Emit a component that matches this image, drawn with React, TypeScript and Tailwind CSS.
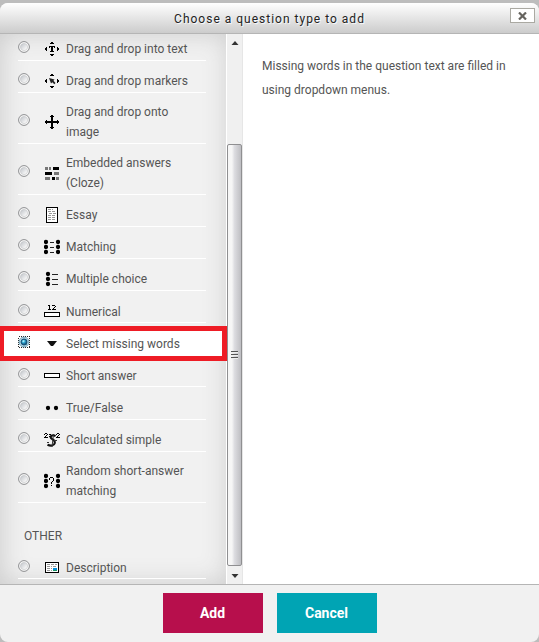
import type { ReactNode } from "react";

type Item = { label: ReactNode; icon: ReactNode; h: string; pad: string; on?: boolean };

function Icon({ children }: { children: ReactNode }) {
  return (
    <svg width="16" height="16" viewBox="0 0 16 16" className="shrink-0" shapeRendering="crispEdges">
      {children}
    </svg>
  );
}

const arrows = (
  <path d="M7 1h2v1H7zM6 2h4v1H6zM6 13h4v1H6zM7 14h2v1H7zM1 7h1v2H1zM2 6h1v4H2zM14 7h1v2h-1zM13 6h1v4h-1z" />
);

const dots = (x: number) => (
  <g shapeRendering="auto">
    {[3, 8, 13].map((y) => (
      <circle key={y} cx={x} cy={y} r="2.150" />
    ))}
  </g>
);

const intoText = (
  <Icon>
    {arrows}
    <path d="M5 5h6v2h-1V6H9v4h1v1H6v-1h1V6H6v1H5z" />
  </Icon>
);
const markers = (
  <Icon>
    {arrows}
    <path shapeRendering="auto" d="M5 5 10.500 6.500 9.500 7.700 11.500 10 10.300 11.300 8.300 9.300 7 10.600z" fill="#222" />
  </Icon>
);
const move = (
  <Icon>
    <path d="M7 2h2v5h5v2H9v5H7V9H2V7h5z" />
    {arrows}
  </Icon>
);
const cloze = (
  <Icon>
    <path d="M9 2h6v3H9zM1 7h7v3H1zM8 12h3v3H8z" />
    <path fill="#777" d="M1 2h3v3H1zM5 2h2v3H5zM10 7h5v3h-5zM1 12h5v3H1zM12 12h3v3h-3z" />
  </Icon>
);
const essay = (
  <Icon>
    <path d="M2.500 .5h11v15h-11z" fill="#fff" stroke="#000" />
    <path d="M4 2.500h5M4 4.500h8M5 6.500h7M4 8.500h8M4 10.500h7M4 12.500h8" stroke="#999" strokeDasharray="3 1" />
  </Icon>
);
const matching = (
  <Icon>
    {dots(2)}
    {dots(14)}
    <path d="M6 3.500h4M6 8.500h4M6 13.500h4" stroke="#222" />
  </Icon>
);
const multiple = (
  <Icon>
    {dots(4)}
    <path d="M8 3.500h6M8 8.500h6M8 13.500h6" stroke="#222" />
  </Icon>
);
const numerical = (
  <Icon>
    <path d="M5 1h1v4h1v1H4V5h1V2H4V1zM8 1h3v1h1v1h-1v1h-1v1h2v1H8V5h1V4h1V3h1V2H8z" />
    <path d="M.5 8.500h15v4H.5z" fill="#fff" stroke="#000" />
  </Icon>
);
const dropdown = (
  <Icon>
    <path shapeRendering="auto" d="M3 5h10L9 10H7z" fill="#111" />
  </Icon>
);
const shortAnswer = (
  <Icon>
    <path d="M.5 5.500h15v4H.5z" fill="#fff" stroke="#000" />
  </Icon>
);
const trueFalse = (
  <Icon>
    <g shapeRendering="auto">
      <circle cx="4" cy="8" r="2.150" />
      <circle cx="12" cy="8" r="2.150" />
    </g>
  </Icon>
);
const calculated = (
  <Icon>
    <path d="M1 1h2v1h1v1H3v1H2v1h2v1H0V5h1V4h1V3h1V2H1v1H0V2h1zM13 1h2v1h1v1h-1v1h-1v1h2v1h-4V5h1V4h1V3h1V2h-2v1h-1V2h1zM5 2h2v1H5zM5 4h2v1H5z" />
    <path shapeRendering="auto" d="M11.500 4.200C9.500 2.500 6.200 3.500 6.700 5.500S11.500 8 10.800 11 6.500 14.200 3.500 12.700" fill="none" stroke="#111" strokeWidth="2.100" />
    <path shapeRendering="auto" d="M9.500 2 8 15M3 10.500h2M10 8.500h3" fill="none" stroke="#333" />
  </Icon>
);
const random = (
  <Icon>
    {dots(2)}
    {dots(14)}
    <path d="M6 4h3v1H6zM5 5h1v2H5zM9 5h1v3H9zM8 8h1v1H8zM7 9h1v2H7zM7 12h1v1H7z" />
  </Icon>
);
const description = (
  <Icon>
    <path d="M1.500 2.500h13v10h-13z" fill="#fff" stroke="#000" />
    <path d="M3 4.500h10M3 6.500h5M3 8.500h5M3 10.500h5M9 6.500h4" stroke="#999" strokeDasharray="3 1" />
    <path d="M9 8h4v3H9z" fill="#078fd8" />
    <path d="M9 10h4v1H9z" fill="#159465" />
  </Icon>
);

const items: Item[] = [
  { label: "Drag and drop into text", icon: intoText, h: "h-[27px]", pad: "pb-[1px]" },
  { label: "Drag and drop markers", icon: markers, h: "h-[32px]", pad: "pb-[1px]" },
  { label: <>Drag and drop onto<br />image</>, icon: move, h: "h-[51px]", pad: "pb-[1px]" },
  { label: <>Embedded answers<br />(Cloze)</>, icon: cloze, h: "h-[51px]", pad: "pb-[1px]" },
  { label: "Essay", icon: essay, h: "h-[32px]", pad: "pb-[1px]" },
  { label: "Matching", icon: matching, h: "h-[32px]", pad: "pb-[1px]" },
  { label: "Multiple choice", icon: multiple, h: "h-[32px]", pad: "pb-[1px]" },
  { label: "Numerical", icon: numerical, h: "h-[32px]", pad: "pb-0" },
  { label: "Select missing words", icon: dropdown, h: "h-[32px]", pad: "pb-0", on: true },
  { label: "Short answer", icon: shortAnswer, h: "h-[32px]", pad: "pb-0" },
  { label: "True/False", icon: trueFalse, h: "h-[33px]", pad: "pb-[1px]" },
  { label: "Calculated simple", icon: calculated, h: "h-[32px]", pad: "pb-[1px]" },
  { label: <>Random short-answer<br />matching</>, icon: random, h: "h-[51px]", pad: "pb-[1px]" },
];

function Radio({ on }: { on?: boolean }) {
  return (
    <svg width="12" height="12" viewBox="0 0 12 12" className="mb-[4px] shrink-0">
      <defs>
        <linearGradient id="radioFace" x1="0" y1="0" x2="1" y2="1">
          <stop offset="0" stopColor="#bcc0c6" />
          <stop offset=".8" stopColor="#f8f8f8" />
        </linearGradient>
        <radialGradient id="radioOn" cx=".4" cy=".35">
          <stop offset="0" stopColor="#d6faff" />
          <stop offset=".5" stopColor="#3bb5dc" />
          <stop offset="1" stopColor="#1a6794" />
        </radialGradient>
      </defs>
      {on && <rect x=".5" y=".5" width="11" height="11" fill="none" stroke="#222" strokeDasharray="1 1" shapeRendering="crispEdges" />}
      <circle cx="6" cy="6" r={on ? "4.900" : "5.400"} fill={on ? "#c5e4f0" : "#fafafa"} stroke={on ? "#6f9fb5" : "#8c8d8f"} />
      <circle cx="6" cy="6" r={on ? "2.900" : "3.600"} fill={on ? "url(#radioOn)" : "url(#radioFace)"} stroke={on ? "#17557a" : "#c2c4c6"} strokeWidth={on ? "1.200" : ".6"} />
    </svg>
  );
}

function Row({ item }: { item: Item }) {
  return (
    <div className={`relative ml-[18px] flex w-[188px] items-end border-b border-white ${item.h} ${item.pad}`}>
      <div className="flex items-center">
        <Radio on={item.on} />
        <div className="ml-[14px] flex items-center gap-[6px]">
          {item.icon}
          <span className="text-[12px] leading-[20px] whitespace-nowrap">{item.label}</span>
        </div>
      </div>
    </div>
  );
}

export default function App() {
  return (
    <div className="h-[642px] w-[539px] overflow-hidden bg-[#bdbdbd] pt-[3px] font-['Roboto',sans-serif] text-[#555]">
      <div className="flex h-[639px] flex-col overflow-hidden rounded-[8px] bg-[#f1f1f1]">
        <header className="relative flex h-[31px] shrink-0 items-center justify-center border-b border-[#b5b5b5] bg-linear-to-b from-white to-[#ccc]">
          <h1 className="pt-[2px] text-[12px] font-normal tracking-[1px] text-[#222] [text-shadow:1px_1px_1px_#fff]">
            Choose a question type to add
          </h1>
          <button aria-label="Close" className="absolute top-[5px] right-[4px] flex h-[15px] w-[25px] items-center justify-center border border-[#aaa9a2] bg-white">
            <svg width="9" height="8" viewBox="0 0 9 8">
              <path d="M1 .5 8 7.500M8 .5 1 7.500" stroke="#66645f" strokeWidth="2.200" />
            </svg>
          </button>
        </header>
        <main className="flex h-[550px] shrink-0">
          <section className="relative w-[227px] shrink-0 border-r border-white bg-[#f1f1f1] shadow-[inset_2px_0_26px_#ccc]">
            {/* Callout behind the selected question type */}
            <div className="absolute top-[292px] left-0 z-0 h-[35px] w-[227px] border-[5px] border-l-[4px] border-[#ee1c25] bg-white" />
            {items.map((item, i) => (
              <Row key={i} item={item} />
            ))}
            <div className="ml-[24px] h-[43px] pt-[23px] text-[12px] leading-[20px]">OTHER</div>
            <Row item={{ label: "Description", icon: description, h: "h-[33px]", pad: "pb-0" }} />
          </section>
          <div className="flex w-[16px] shrink-0 flex-col border-r border-[#e6e6e6] bg-[#f0f0f0]">
            <div className="flex h-[110px] justify-center pt-[7px]">
              <svg width="8" height="4" viewBox="0 0 8 4"><path d="M4 0 7.500 4H.5z" fill="#333" /></svg>
            </div>
            <div className="flex h-[422px] items-center justify-center rounded-[2px] border border-[#8f8f91] bg-linear-to-r from-[#f6f6f6] from-30% via-[#dcdce0] via-50% to-[#bebec2]">
              <div className="flex h-[8px] w-[7px] flex-col justify-between">
                <i className="h-[2px] border-t border-[#555] bg-[#eee]" />
                <i className="h-[2px] border-t border-[#555] bg-[#eee]" />
                <i className="h-[2px] border-t border-[#555] bg-[#eee]" />
              </div>
            </div>
            <div className="flex h-[18px] justify-center pt-[8px]">
              <svg width="8" height="4" viewBox="0 0 8 4"><path d="M.5 0h7L4 4z" fill="#333" /></svg>
            </div>
          </div>
          <section className="flex-1 bg-white pt-[20px] pl-[19px] text-[12px] leading-[24px]">
            Missing words in the question text are filled in
            <br />
            using dropdown menus.
          </section>
        </main>
        <footer className="flex h-[58px] shrink-0 justify-center gap-[14px] border-t border-[#b5b5b5] pt-[8px] text-[14px] font-bold text-white">
          <button className="h-[40px] w-[100px] bg-[#b70f4c]">Add</button>
          <button className="h-[40px] w-[100px] bg-[#00a4b4]">Cancel</button>
        </footer>
      </div>
    </div>
  );
}
